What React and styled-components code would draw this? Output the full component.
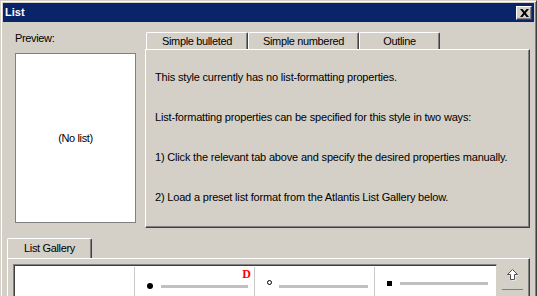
import styled, { createGlobalStyle } from "styled-components";

const Global = createGlobalStyle`
    html, body {
        margin: 0;
        padding: 0;
        overflow: hidden;
        background: #d4d0c8;
    }
    * { box-sizing: border-box; }
`

const Window = styled.div`
    width: 537px;
    height: 340px;
    background: #d4d0c8;
    border: 1px solid;
    border-color: #d4d0c8 #404040 #404040 #d4d0c8;
    box-shadow: inset 1px 1px #ffffff, inset -1px -1px #808080;
    padding: 2px 2px 0 2px;
    font-family: "Liberation Sans", Arial, sans-serif;
    font-size: 11px;
    letter-spacing: -0.35px;
    color: #000000;
    display: flex;
    flex-direction: column;
`

const TitleBar = styled.div`
    height: 19px;
    background: #0a246a;
    display: flex;
    align-items: center;
    justify-content: space-between;
    padding: 0 2px 0 2px;
`

const Title = styled.div`
    color: #ffffff;
    font-weight: bold;
    font-size: 11px;
    letter-spacing: 0;
    line-height: 13px;
`

const CloseButton = styled.div`
    width: 16px;
    height: 14px;
    background: #d4d0c8;
    border: 1px solid;
    border-color: #ffffff #404040 #404040 #ffffff;
    box-shadow: inset -1px -1px #808080;
    display: flex;
    align-items: center;
    justify-content: center;
`

const Body = styled.div`
    display: flex;
    flex-direction: column;
    padding: 10px 4px 0 4px;
`

const TopRow = styled.div`
    display: flex;
    gap: 9px;
    padding-left: 8px;
`

const PreviewCol = styled.div`
    width: 121px;
    display: flex;
    flex-direction: column;
    gap: 8px;
`

const Label = styled.div`
    line-height: 13px;
`

const PreviewBox = styled.div`
    height: 170px;
    background: #ffffff;
    border: 1px solid #808080;
    display: flex;
    align-items: center;
    justify-content: center;
    line-height: 13px;
`

const TabsCol = styled.div`
    width: 385px;
    display: flex;
    flex-direction: column;
`

const TabStrip = styled.div`
    display: flex;
    padding-left: ${p => p.$indent}px;
`

const Tab = styled.div`
    width: ${p => p.$w}px;
    height: ${p => p.$h}px;
    border-left: 1px solid #ffffff;
    border-top: 1px solid #ffffff;
    border-right: 1px solid #404040;
    border-top-left-radius: 2px;
    border-top-right-radius: 2px;
    box-shadow: inset -1px 0 #808080;
    display: flex;
    align-items: center;
    justify-content: center;
    line-height: 13px;
`

const Panel = styled.div`
    height: 179px;
    border: 1px solid;
    border-color: #ffffff #404040 #404040 #ffffff;
    box-shadow: inset -1px -1px #808080;
    padding: 21px 8px 0 9px;
    display: flex;
    flex-direction: column;
    gap: 27px;
    letter-spacing: -0.18px;
`

const Para = styled.div`
    line-height: 13px;
    white-space: nowrap;
`

const GallerySection = styled.div`
    margin-top: 10px;
    display: flex;
    flex-direction: column;
`

const GalleryPanel = styled.div`
    width: 523px;
    height: 60px;
    border-left: 1px solid #ffffff;
    border-top: 1px solid #ffffff;
    border-right: 1px solid #404040;
    box-shadow: inset -1px 0 #808080;
    padding: 5px 0 0 5px;
    display: flex;
`

const GalleryBox = styled.div`
    width: 484px;
    height: 60px;
    background: #ffffff;
    border: 1px solid;
    border-color: #808080 #d4d0c8 #d4d0c8 #808080;
    box-shadow: inset 1px 1px #404040;
    padding: 2px 0 0 1px;
    display: flex;
`

const Cell = styled.div`
    position: relative;
    width: 120px;
    height: 100%;
    border-right: ${p => (p.$last ? "none" : "1px solid #c8c8c8")};
    display: flex;
    align-items: flex-start;
    padding-left: ${p => p.$pad}px;
`

const Marker = styled.div`
    flex: none;
    width: ${p => p.$size}px;
    height: ${p => p.$size}px;
    margin-top: ${p => p.$top}px;
    margin-right: ${p => p.$gap}px;
    background: ${p => (p.$hollow ? "#ffffff" : "#000000")};
    border: ${p => (p.$hollow ? "1px solid #000000" : "none")};
    border-radius: ${p => (p.$square ? "0" : "50%")};
`

const Line = styled.div`
    width: ${p => p.$w}px;
    height: 3px;
    margin-top: ${p => p.$top}px;
    background: #c0c0c0;
`

const Badge = styled.div`
    position: absolute;
    top: 2px;
    right: 3px;
    color: #ff0000;
    font-family: "Liberation Serif", "Times New Roman", serif;
    font-weight: bold;
    font-size: 12px;
    line-height: 11px;
    letter-spacing: 0;
`

const ScrollCol = styled.div`
    width: 32px;
    display: flex;
    justify-content: center;
    padding-top: 5px;
    padding-right: 2px;
`

const ScrollButton = styled.div`
    width: 21px;
    height: 21px;
    border-bottom: 1px solid #808080;
    display: flex;
    justify-content: center;
`

const UpArrow = () => (
    <svg width="13" height="12" viewBox="0 0 13 12">
        <path d="M7.5 1.5 L12.5 6.5 L9.5 6.5 L9.5 11.5 L5.5 11.5 L5.5 6.5 L2.5 6.5 Z" fill="#ffffff" />
        <path d="M6.5 0.5 L11.5 5.5 L8.5 5.5 L8.5 10.5 L4.5 10.5 L4.5 5.5 L1.5 5.5 Z" fill="#ffffff" stroke="#505050" strokeWidth="1" />
    </svg>
)

const CloseGlyph = () => (
    <svg width="9" height="8" viewBox="0 0 9 8">
        <path d="M0 0 L2.5 0 L4.5 2.5 L6.5 0 L9 0 L5.8 4 L9 8 L6.5 8 L4.5 5.5 L2.5 8 L0 8 L3.2 4 Z" fill="#000000" />
    </svg>
)

const tabs = [
    { label: "Simple bulleted", w: 102 },
    { label: "Simple numbered", w: 111 },
    { label: "Outline", w: 81 },
]

const messages = [
    "This style currently has no list-formatting properties.",
    "List-formatting properties can be specified for this style in two ways:",
    "1) Click the relevant tab above and specify the desired properties manually.",
    "2) Load a preset list format from the Atlantis List Gallery below.",
]

const App = () => {
    return (
        <Window>
            <Global />
            <TitleBar>
                <Title>List</Title>
                <CloseButton>
                    <CloseGlyph />
                </CloseButton>
            </TitleBar>
            <Body>
                <TopRow>
                    <PreviewCol>
                        <Label>Preview:</Label>
                        <PreviewBox>(No list)</PreviewBox>
                    </PreviewCol>
                    <TabsCol>
                        <TabStrip $indent={1}>
                            {tabs.map(t => (
                                <Tab key={t.label} $w={t.w} $h={17}>{t.label}</Tab>
                            ))}
                        </TabStrip>
                        <Panel>
                            {messages.map(m => (
                                <Para key={m}>{m}</Para>
                            ))}
                        </Panel>
                    </TabsCol>
                </TopRow>
                <GallerySection>
                    <TabStrip $indent={0}>
                        <Tab $w={85} $h={20}>List Gallery</Tab>
                    </TabStrip>
                    <GalleryPanel>
                        <GalleryBox>
                            <Cell $pad={0} />
                            <Cell $pad={12}>
                                <Marker $size={6} $top={16} $gap={8} />
                                <Line $w={87} $top={18} />
                                <Badge>D</Badge>
                            </Cell>
                            <Cell $pad={12}>
                                <Marker $size={5} $top={13} $gap={7} $hollow />
                                <Line $w={89} $top={18} />
                            </Cell>
                            <Cell $pad={12} $last>
                                <Marker $size={5} $top={14} $gap={8} $square />
                                <Line $w={88} $top={15} />
                            </Cell>
                        </GalleryBox>
                        <ScrollCol>
                            <ScrollButton>
                                <UpArrow />
                            </ScrollButton>
                        </ScrollCol>
                    </GalleryPanel>
                </GallerySection>
            </Body>
        </Window>
    )
}

export default App;
